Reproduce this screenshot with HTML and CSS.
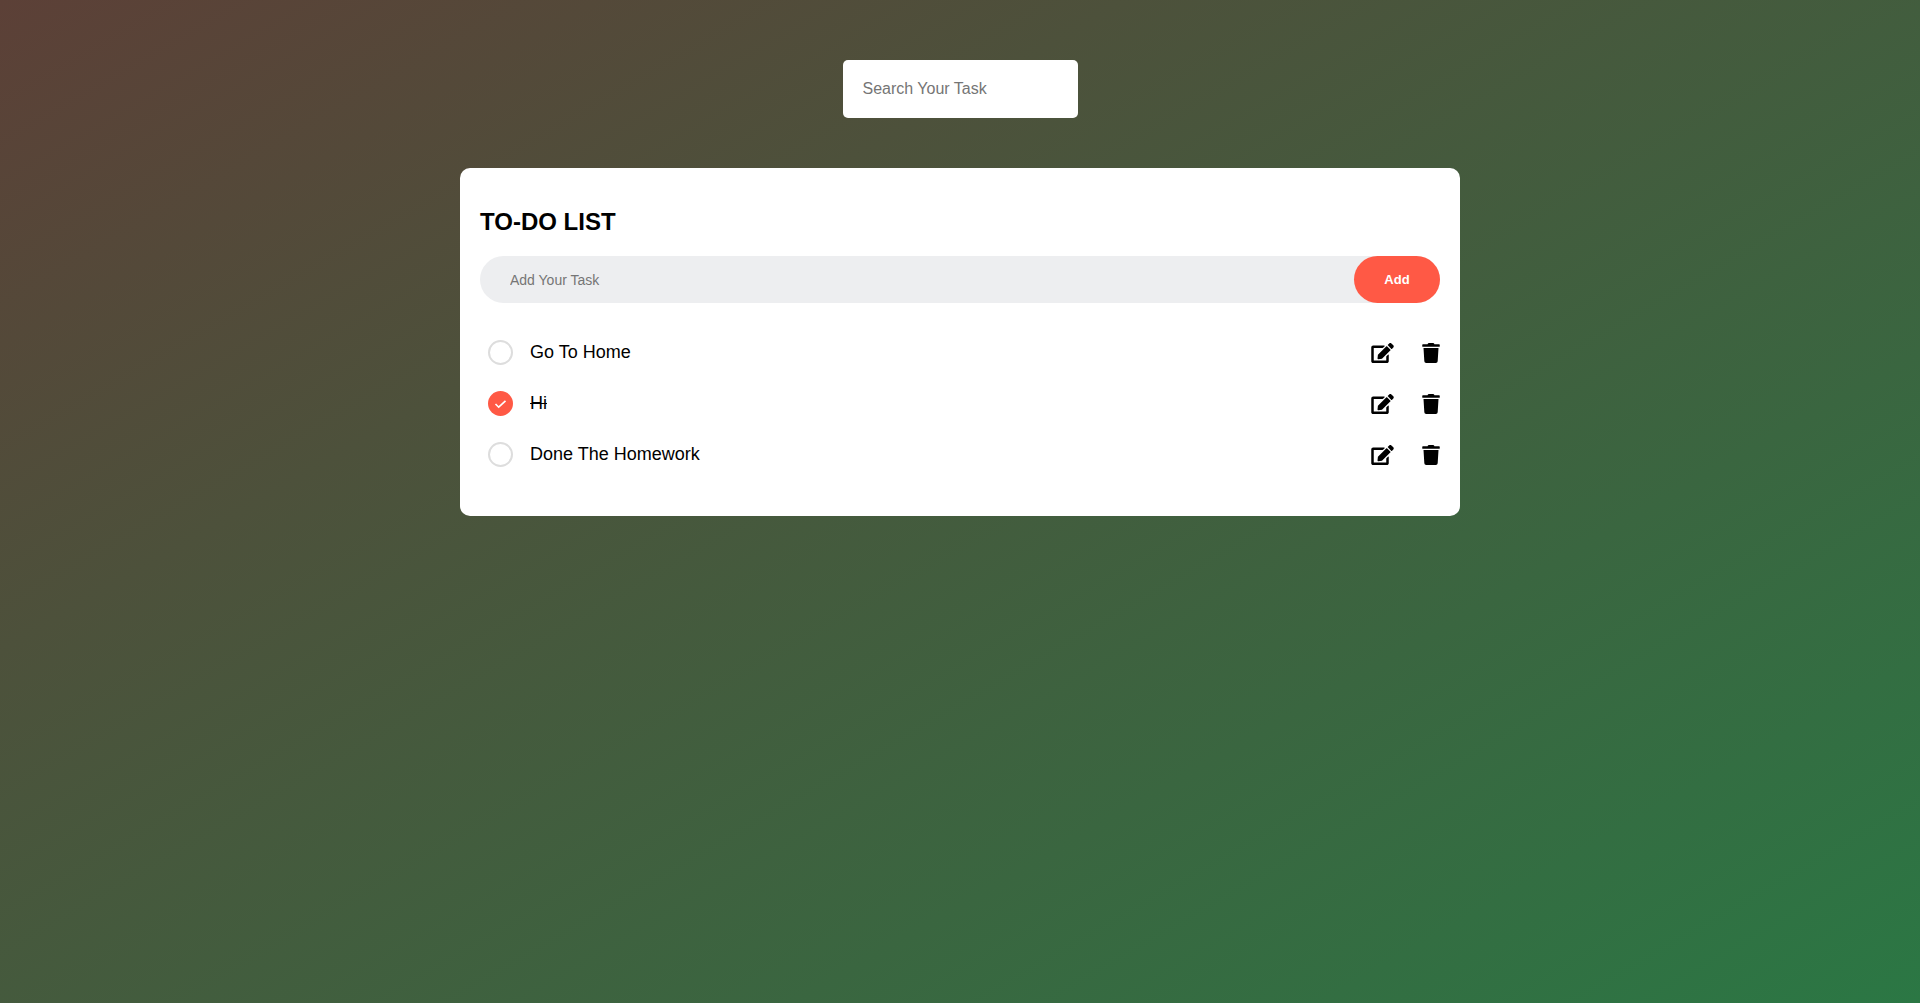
FILE: index.html
```html
<!DOCTYPE html>
<html lang="en">
<head>
  <meta charset="utf-8">
  <meta name="viewport" content="width=device-width, initial-scale=1">
  <title>To-Do List</title>
  <link rel="stylesheet" href="styles.css">
</head>
<body>
  <svg class="sprite" aria-hidden="true">
    <symbol id="edit" viewBox="0 0 576 512"><path d="M402.6 83.2l90.2 90.2c3.8 3.8 3.8 10 0 13.8L274.4 405.6l-92.8 10.3c-12.4 1.4-22.9-9.1-21.5-21.5l10.3-92.8L388.8 83.2c3.8-3.8 10-3.8 13.8 0zm162-22.9l-48.8-48.8c-15.2-15.2-39.9-15.2-55.2 0l-35.4 35.4c-3.8 3.8-3.8 10 0 13.8l90.2 90.2c3.8 3.8 10 3.8 13.8 0l35.4-35.4c15.2-15.3 15.2-40 0-55.2zM384 346.2V448H64V128h229.8c3.2 0 6.2-1.3 8.5-3.5l40-40c7.6-7.6 2.2-20.5-8.5-20.5H48C21.5 64 0 85.5 0 112v352c0 26.5 21.5 48 48 48h352c26.5 0 48-21.5 48-48V306.2c0-10.7-12.9-16-20.5-8.5l-40 40c-2.2 2.3-3.5 5.3-3.5 8.5z"/></symbol>
    <symbol id="trash" viewBox="0 0 448 512"><path d="M432 32H312l-9.4-18.7A24 24 0 0 0 281.1 0H166.8a23.72 23.72 0 0 0-21.4 13.3L136 32H16A16 16 0 0 0 0 48v32a16 16 0 0 0 16 16h416a16 16 0 0 0 16-16V48a16 16 0 0 0-16-16zM53.2 467a48 48 0 0 0 47.9 45h245.8a48 48 0 0 0 47.9-45L416 128H32z"/></symbol>
  </svg>
  <main class="page">
    <input class="search" type="search" placeholder="Search Your Task" aria-label="Search your task">
    <section class="card">
      <h1 class="title">TO-DO LIST</h1>
      <form class="add-row">
        <input class="add-input" type="text" placeholder="Add Your Task" aria-label="Add your task">
        <button class="add-button" type="button">Add</button>
      </form>
      <ul class="tasks">
        <li class="task">
          <label class="task-label"><input class="check" type="checkbox"><span class="task-text">Go To Home</span></label>
          <button class="icon-button" type="button" aria-label="Edit"><svg class="icon-edit"><use href="#edit"/></svg></button>
          <button class="icon-button" type="button" aria-label="Delete"><svg class="icon-trash"><use href="#trash"/></svg></button>
        </li>
        <li class="task">
          <label class="task-label"><input class="check" type="checkbox" checked><span class="task-text">Hi</span></label>
          <button class="icon-button" type="button" aria-label="Edit"><svg class="icon-edit"><use href="#edit"/></svg></button>
          <button class="icon-button" type="button" aria-label="Delete"><svg class="icon-trash"><use href="#trash"/></svg></button>
        </li>
        <li class="task">
          <label class="task-label"><input class="check" type="checkbox"><span class="task-text">Done The Homework</span></label>
          <button class="icon-button" type="button" aria-label="Edit"><svg class="icon-edit"><use href="#edit"/></svg></button>
          <button class="icon-button" type="button" aria-label="Delete"><svg class="icon-trash"><use href="#trash"/></svg></button>
        </li>
      </ul>
    </section>
  </main>
</body>
</html>
```
FILE: styles.css
```css
* {
  box-sizing: border-box;
  margin: 0;
  padding: 0;
}

body,
input,
button {
  font-family: Arial, "Liberation Sans", sans-serif;
}

.sprite {
  display: none;
}

.page {
  display: flex;
  flex-direction: column;
  align-items: center;
  gap: 50px;
  min-height: 100vh;
  padding: 60px 20px;
  background: linear-gradient(150deg, #5c4037, #2b7744);
}

.search {
  width: 235px;
  padding: 20px;
  border: 0;
  border-radius: 5px;
  outline: 0;
  background: #fff;
  font-size: 16px;
  line-height: 18px;
  appearance: none;
}

.card {
  width: 100%;
  max-width: 1000px;
  padding: 40px 20px 36px;
  border-radius: 10px;
  background: #fff;
}

.title {
  margin-bottom: 20px;
  font-size: 24px;
  line-height: 28px;
}

.add-row {
  display: flex;
  margin-bottom: 24px;
  border-radius: 30px;
  background: #edeef0;
}

.add-input {
  flex: 1;
  min-width: 0;
  padding: 0 30px;
  border: 0;
  outline: 0;
  background: transparent;
  font-size: 14px;
}

.add-button {
  width: 86px;
  padding: 16px 0;
  border: 0;
  border-radius: 30px;
  background: #ff5945;
  color: #fff;
  font-size: 13px;
  font-weight: 700;
  line-height: 15px;
}

.tasks {
  list-style: none;
}

.task {
  display: flex;
  align-items: center;
  gap: 28px;
  height: 51px;
  padding-left: 8px;
}

.task-label {
  display: flex;
  flex: 1;
  align-items: center;
  gap: 17px;
  font-size: 18px;
  line-height: 23px;
}

.check {
  width: 25px;
  height: 25px;
  border: 2px solid #ddd;
  border-radius: 50%;
  appearance: none;
}

.check:checked {
  border: 0;
  background: #ff5945 url("data:image/svg+xml,%3Csvg xmlns='http://www.w3.org/2000/svg' viewBox='0 0 25 25'%3E%3Cpath d='M7.5 13l3.2 3.2 6.8-6.4' fill='none' stroke='white' stroke-width='1.6'/%3E%3C/svg%3E");
}

.check:checked + .task-text {
  text-decoration: line-through;
}

.icon-button {
  display: flex;
  border: 0;
  background: transparent;
}

.icon-edit {
  width: 23px;
  height: 20px;
}

.icon-trash {
  width: 18px;
  height: 20px;
}
```
